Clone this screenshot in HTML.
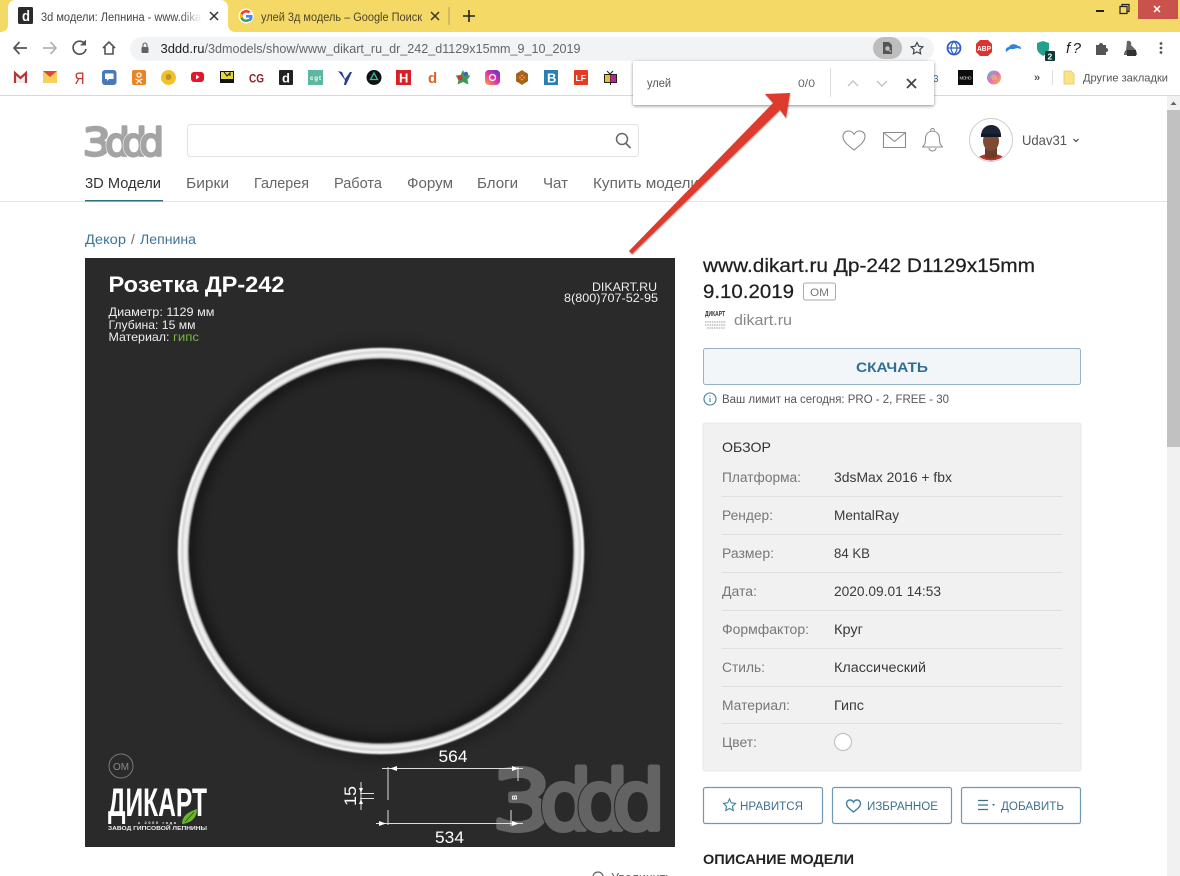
<!DOCTYPE html>
<html lang="ru"><head><meta charset="utf-8"><title>3d модели: Лепнина</title>
<style>
html,body{margin:0;padding:0;background:#fff;width:1180px;height:876px;overflow:hidden}
svg{display:block;position:absolute;left:0;top:0}
text{font-family:"Liberation Sans","DejaVu Sans",sans-serif;white-space:pre}
.l{font-size:13.5px;fill:#777}.v{font-size:13.5px;fill:#3a3a3a}
.n{font-size:14.5px;fill:#666}.b{font-size:11.5px;fill:#3f6f8d}
.ln{stroke:#dfdfdf;stroke-width:1}
.dim{stroke:#ddd;stroke-width:1;fill:none}
.pg{fill:none;stroke:#8c8c8c;stroke-width:1.1;stroke-linejoin:round}
.btn{fill:#fff;stroke:#6d99b4;stroke-width:1.2}
.lg text{font-family:"DejaVu Sans",sans-serif;stroke-linejoin:round}
.lg1{font-size:38.5px}.lg1 .u{fill:#fff;stroke:#fff;stroke-width:3.4px}.lg1 .t{fill:#a4a4a4;stroke:#a4a4a4;stroke-width:2.4px}
.lg2{font-size:82px}.lg2 .u{fill:#2a2a2a;stroke:#2a2a2a;stroke-width:7px}.lg2 .t{fill:#636363;stroke:#636363;stroke-width:5px}
</style></head><body>
<svg width="1180" height="876" viewBox="0 0 1180 876" xmlns="http://www.w3.org/2000/svg">
<defs>
<linearGradient id="fade" x1="0" x2="1"><stop offset="0" stop-color="#fff" stop-opacity="0"/><stop offset="1" stop-color="#fff"/></linearGradient>
<linearGradient id="cg" x1="0" x2="1" y1="0" y2="1"><stop offset="0" stop-color="#4cc"/><stop offset=".5" stop-color="#e6b"/><stop offset="1" stop-color="#ec3"/></linearGradient>
<linearGradient id="ig" x1="0" x2="1" y1="1" y2="0"><stop offset="0" stop-color="#fa3"/><stop offset=".5" stop-color="#d3a"/><stop offset="1" stop-color="#53c"/></linearGradient>
<filter id="bl" x="-20%" y="-20%" width="140%" height="140%"><feGaussianBlur stdDeviation="6"/></filter>
<filter id="bs" x="-20%" y="-20%" width="140%" height="140%"><feGaussianBlur stdDeviation=".7"/></filter>
<filter id="sh" x="-5%" y="-10%" width="110%" height="130%"><feDropShadow dx="0" dy="1" stdDeviation="1.5" flood-color="#000" flood-opacity=".45"/></filter>
<filter id="as" x="-10%" y="-10%" width="120%" height="120%"><feDropShadow dx=".5" dy="1" stdDeviation=".8" flood-color="#000" flood-opacity=".35"/></filter>
<clipPath id="im"><rect x="85" y="258" width="590" height="589"/></clipPath>
<clipPath id="av"><circle cx="991" cy="140" r="20.5"/></clipPath>
</defs>

<!-- chrome frame -->
<rect width="1180" height="32" fill="#f4d967"/>
<path d="M0 32C5 32 8 29 8 25V8C8 3 11 0 16 0H220C225 0 228 3 228 8V25C228 29 231 32 236 32Z" fill="#fff"/>
<rect x="18" y="7" width="15" height="17" rx="1.5" fill="#2b2b2b"/>
<text x="22" y="21" font-size="15" font-weight="bold" fill="#fff" textLength="8" lengthAdjust="spacingAndGlyphs">d</text>
<text x="41" y="21" font-size="11.5" fill="#444" textLength="160" lengthAdjust="spacingAndGlyphs">3d модели: Лепнина - www.dika</text>
<rect x="180" y="8" width="22" height="18" fill="url(#fade)"/>
<path d="M210 12l8 8M218 12l-8 8" stroke="#333" stroke-width="1.5"/>
<circle cx="246" cy="16" r="7.5" fill="#fff"/>
<path d="M246 12.500a3.500 3.500 0 0 1 2.400 1l2-2a6.500 6.500 0 0 0-10 2l2.300 1.800A3.800 3.800 0 0 1 246 12.500z" fill="#ea4335"/>
<path d="M242.700 15.200l-2.300-1.800a6.500 6.500 0 0 0 0 5.200l2.300-1.800a3.800 3.800 0 0 1 0-1.600z" fill="#fbbc05"/>
<path d="M246 19.500a3.500 3.500 0 0 1-3.300-2.700l-2.300 1.800a6.500 6.500 0 0 0 9.800 2l-2.200-1.700a3.800 3.800 0 0 1-2 .6z" fill="#34a853"/>
<path d="M252.300 15H246v2.600h3.600a3 3 0 0 1-1.300 1.900l2.200 1.700a6.300 6.300 0 0 0 1.800-6.200z" fill="#4285f4"/>
<text x="261" y="21" font-size="11.5" fill="#4c4528" textLength="161" lengthAdjust="spacingAndGlyphs">улей 3д модель – Google Поиск</text>
<path d="M431 12l8 8M439 12l-8 8" stroke="#3a3520" stroke-width="1.5"/>
<rect x="448.500" y="7" width="1" height="18" fill="#a99b58"/>
<path d="M469 10v12M463 16h12" stroke="#222" stroke-width="1.6"/>
<rect x="1096" y="10" width="8" height="2" fill="#222"/>
<path d="M1120 6.500h7v7h-7zM1122 6.500V4.500h7v7h-2" fill="none" stroke="#222" stroke-width="1.2"/>
<rect x="1138" y="0" width="40" height="19" fill="#c9524c"/>
<path d="M1154 6l6 6M1160 6l-6 6" stroke="#fff" stroke-width="1.5"/>

<!-- toolbar -->
<rect y="32" width="1180" height="63" fill="#fff"/>
<rect y="95" width="1180" height="1" fill="#d8d8d8"/>
<path d="M27 48H14M19.500 42L14 48l5.500 6" fill="none" stroke="#555" stroke-width="1.7"/>
<path d="M43 48h13M50.500 42L56 48l-5.500 6" fill="none" stroke="#b4b4b4" stroke-width="1.7"/>
<path d="M85 44a6.500 6.500 0 1 0 1 5" fill="none" stroke="#555" stroke-width="1.7"/><path d="M86 39.500v6h-6z" fill="#555"/>
<path d="M103 48l6-6 6 6M105 47v7h8v-7" fill="none" stroke="#555" stroke-width="1.6"/>
<rect x="130" y="37" width="804" height="24" rx="12" fill="#f1f3f4"/>
<rect x="141.500" y="47" width="7" height="6" rx="1" fill="#5f6368"/><path d="M143 47v-2a2 2 0 0 1 4 0v2" fill="none" stroke="#5f6368" stroke-width="1.1"/>
<text x="160.500" y="53" font-size="12.500" fill="#222" textLength="44" lengthAdjust="spacingAndGlyphs">3ddd.ru</text>
<text x="204.500" y="53" font-size="12.500" fill="#666" textLength="376" lengthAdjust="spacingAndGlyphs">/3dmodels/show/www_dikart_ru_dr_242_d1129x15mm_9_10_2019</text>
<rect x="873" y="37" width="29" height="22" rx="11" fill="#bdbdbd"/>
<path d="M883 42h6l3 3v9h-9z" fill="#555"/><circle cx="887.500" cy="48.500" r="2.300" fill="#bdbdbd"/><path d="M889 50l2 2" stroke="#bdbdbd"/>
<path d="M917 42.500l1.800 3.700 4.100.6-3 2.900.7 4.100-3.600-1.900-3.600 1.900.7-4.100-3-2.900 4.100-.6z" fill="none" stroke="#444" stroke-width="1.2"/>
<circle cx="954" cy="48" r="6.500" fill="none" stroke="#2f5fc9" stroke-width="1.800"/><path d="M954 41.500c-4 4-4 9 0 13c4-4 4-9 0-13M947.500 48h13" fill="none" stroke="#2f5fc9" stroke-width="1.200"/>
<path d="M980 40h8l4 4v8l-4 4h-8l-4-4v-8z" fill="#d9342f"/>
<text x="977" y="51" font-size="7.500" font-weight="bold" fill="#fff" textLength="14" lengthAdjust="spacingAndGlyphs">ABP</text>
<path d="M1006 52c-1-3 1-5 3-5c1-3 6-4 9-1c2 0 3 1 3 3l-4-1l-3 1h-4z" fill="#2b86d8"/>
<path d="M1043 41l6 2v5c0 4-3 6-6 8c-3-2-6-4-6-8v-5z" fill="#23a18c"/>
<rect x="1045" y="51" width="10" height="10" rx="1" fill="#0e3a33"/><text x="1047.500" y="59.500" font-size="8.500" font-weight="bold" fill="#fff">2</text>
<text x="1066" y="53" font-family="Liberation Serif" font-style="italic" font-size="15" fill="#222" textLength="15">f?</text>
<path d="M1096 45h3a2 2 0 0 1 4 0h3v3a2 2 0 0 1 0 4v3h-10z" fill="#555"/>
<path d="M1127 41c3-1 5 1 4 4l3 3c2 2 3 4 3 7h-13c0-3 1-4 2-5z" fill="#666"/><rect x="1127" y="50" width="9" height="6" fill="#333"/>
<circle cx="1161" cy="43.500" r="1.400" fill="#555"/><circle cx="1161" cy="48" r="1.400" fill="#555"/><circle cx="1161" cy="52.500" r="1.400" fill="#555"/>

<!-- bookmarks -->
<path d="M15 83V73l5.500 5 5.500-5v10" fill="#eee" stroke="#b03a36" stroke-width="2.200"/>
<rect x="43" y="71" width="14" height="12" fill="#f6cf5c"/><path d="M43 71l7 6 7-6z" fill="#e4482c"/>
<text x="74.500" y="84" font-size="17" fill="#c42f2a" textLength="10" lengthAdjust="spacingAndGlyphs">Я</text>
<rect x="102" y="70" width="14.500" height="15" rx="3" fill="#4a79b8"/><path d="M105 73.500h8.500v5.500h-4.500l-2 2v-2h-2z" fill="#fff"/>
<rect x="132" y="70" width="14" height="15" rx="2" fill="#ec8424"/><circle cx="139" cy="75" r="2" fill="none" stroke="#fff" stroke-width="1.300"/><path d="M135.500 79l3.500 1.500 3.500-1.500M136.500 83.500l2.500-3 2.500 3" fill="none" stroke="#fff" stroke-width="1.200"/>
<circle cx="168.500" cy="77.500" r="7.500" fill="#f3c22b"/><circle cx="168.500" cy="77" r="3" fill="#b9962a"/>
<rect x="191" y="72" width="13" height="10" rx="3" fill="#e8142a"/><path d="M196 74.500l3.500 2.500-3.500 2.500z" fill="#fff"/>
<rect x="220" y="71" width="14" height="12" fill="#111"/><rect x="221" y="72" width="12" height="7" fill="#e3d744"/><path d="M224 72l3 4 3-3v3" stroke="#111" fill="none"/>
<text x="249" y="82.500" font-size="11.500" font-weight="bold" fill="#8e1f27" textLength="15" lengthAdjust="spacingAndGlyphs">CG</text>
<rect x="279" y="70" width="14" height="15" rx="1" fill="#222"/><text x="282" y="82.500" font-size="13" font-weight="bold" fill="#fff">d</text>
<rect x="308" y="70" width="15" height="15" fill="#5db7a2"/><text x="310" y="80" font-size="6" font-weight="bold" fill="#fff" textLength="11">cgt</text>
<path d="M338 71l4 1 3 7 5-7 2 0-6 13h-2l1-5z" fill="#243f8e"/>
<circle cx="374" cy="77.500" r="7.500" fill="#111"/><path d="M374 73l3.500 6.500h-7z" fill="none" stroke="#2fc3a6" stroke-width="1.300"/>
<rect x="396" y="70" width="15" height="15" fill="#d72027"/><text x="399" y="82.500" font-size="13" font-weight="bold" fill="#fff">Н</text>
<text x="428" y="83" font-size="15" font-weight="bold" fill="#d8672c">d</text>
<path d="M463 70l2.500 5 5 .5-3 4 1 5-5.500-2.500-5.500 2.500 1-5-3-4 5-.5z" fill="#3b9b57"/><circle cx="460" cy="78" r="2.500" fill="#d0352e"/><circle cx="466" cy="74" r="2.200" fill="#3b62c4"/>
<rect x="485" y="70" width="15" height="15" rx="4" fill="url(#ig)"/><circle cx="492.500" cy="77.500" r="3" fill="none" stroke="#fff" stroke-width="1.300"/>
<path d="M522 70l6 4v7l-6 4-6-4v-7z" fill="#9c6a1c"/><circle cx="522" cy="77.500" r="2.800" fill="#e0a23a"/><path d="M517 73l10 9M527 73l-10 9" stroke="#c6401e"/>
<rect x="544" y="70" width="14" height="15" fill="#2b7fb2"/><text x="547" y="82.500" font-size="13" font-weight="bold" fill="#fff">В</text>
<rect x="574" y="70" width="14" height="15" rx="1" fill="#e53a23"/><text x="575.500" y="81" font-size="8.500" font-weight="bold" fill="#fff">LF</text>
<rect x="604" y="74" width="13" height="9" fill="#222"/><rect x="605" y="75" width="5" height="7" fill="#e2c32c"/><rect x="610.500" y="75" width="5.500" height="7" fill="#b5298b"/><path d="M607 71l3 3 3-3M610.500 83v2" stroke="#222" fill="none"/>
<text x="933" y="82" font-size="10" fill="#2f6fa8">3</text>
<rect x="958" y="70" width="15" height="15" fill="#0c0c0c"/><text x="959.500" y="79.500" font-size="4.500" fill="#ddd" textLength="12">MOHO</text>
<circle cx="994" cy="77.500" r="7" fill="url(#cg)"/><circle cx="994" cy="77.500" r="3" fill="#d7c95b" opacity=".6"/>
<text x="1034" y="81" font-size="11" font-weight="bold" fill="#555">»</text>
<rect x="1052" y="70" width="1" height="15" fill="#ddd"/>
<path d="M1064 71h7l3 3v10h-10z" fill="#fbe38a" stroke="#e4c556" stroke-width=".8"/>
<text x="1083" y="81.500" font-size="11" fill="#555" textLength="85" lengthAdjust="spacingAndGlyphs">Другие закладки</text>

<!-- scrollbar -->
<rect x="1167" y="96" width="13" height="780" fill="#f1f1f1"/>
<path d="M1170.500 105l3-3.500 3 3.500z" fill="#666"/>
<rect x="1167" y="110" width="13" height="337" fill="#c1c1c1"/>

<!-- header -->
<g class="lg lg1">
<text class="t" transform="translate(82.600,155.300) scale(1.15,1)">3</text>
<text class="u" transform="translate(105.200,155.300)">d</text><text class="t" transform="translate(105.200,155.300)">d</text>
<text class="u" transform="translate(122.400,155.300)">d</text><text class="t" transform="translate(122.400,155.300)">d</text>
<text class="u" transform="translate(139.500,155.300)">d</text><text class="t" transform="translate(139.500,155.300)">d</text>
</g>
<rect x="187.500" y="124.500" width="451" height="32" rx="3" fill="#fff" stroke="#e2e2e2"/>
<circle cx="622" cy="139" r="5.500" fill="none" stroke="#666" stroke-width="1.500"/><path d="M626 143.500l4.500 4.500" stroke="#666" stroke-width="1.600"/>
<path class="pg" d="M854 150c-5-4-11-8-11-13.500c0-3.500 2.500-5.500 5.500-5.500c2.500 0 4.500 1.500 5.500 3.500c1-2 3-3.500 5.500-3.500c3 0 5.500 2 5.500 5.500c0 5.500-6 9.500-11 13.500z"/>
<rect class="pg" x="883.500" y="132.500" width="22" height="15"/><path class="pg" d="M883.500 132.500l11 9 11-9"/>
<path class="pg" d="M922.500 147c2-2 3-3.500 3-8c0-4.500 2.500-7.500 7-8c4.500 .5 7 3.500 7 8c0 4.500 1 6 3 8zM929 148a3.500 3 0 0 0 7 0M930.500 130.500a2 2 0 0 1 4 0"/>
<circle cx="991" cy="140" r="21.500" fill="#fff" stroke="#ccc"/>
<g clip-path="url(#av)">
<path d="M974 165c2-9 9-11 17-11s15 2 17 11z" fill="#b6342a"/>
<path d="M985 148h12v9c-3 2-9 2-12 0z" fill="#6d3c28"/>
<ellipse cx="991" cy="141" rx="8" ry="10" fill="#7d4a32"/>
<path d="M981 136c0-7 5-11 10-11s10 3 10 11z" fill="#1c2336"/><rect x="981" y="134" width="20" height="3" fill="#111827"/>
</g>
<text x="1022" y="145" font-size="14" fill="#555" textLength="45" lengthAdjust="spacingAndGlyphs">Udav31</text>
<path d="M1073.500 139l2.500 2.500 2.500-2.500" fill="none" stroke="#444" stroke-width="1.200"/>

<text class="n" x="85" y="188" style="fill:#333" textLength="76" lengthAdjust="spacingAndGlyphs">3D Модели</text>
<text class="n" x="186" y="188" textLength="43" lengthAdjust="spacingAndGlyphs">Бирки</text>
<text class="n" x="254" y="188" textLength="55" lengthAdjust="spacingAndGlyphs">Галерея</text>
<text class="n" x="334" y="188" textLength="48" lengthAdjust="spacingAndGlyphs">Работа</text>
<text class="n" x="407" y="188" textLength="46" lengthAdjust="spacingAndGlyphs">Форум</text>
<text class="n" x="477" y="188" textLength="41" lengthAdjust="spacingAndGlyphs">Блоги</text>
<text class="n" x="543" y="188" textLength="25" lengthAdjust="spacingAndGlyphs">Чат</text>
<text class="n" x="593" y="188" textLength="106" lengthAdjust="spacingAndGlyphs">Купить модели</text>
<rect y="201" width="1167" height="1" fill="#e4e4e4"/>
<rect x="85" y="200" width="78" height="1.500" fill="#2f7080"/>
<text x="85" y="244" font-size="13.500" fill="#3f7499" textLength="41" lengthAdjust="spacingAndGlyphs">Декор</text>
<text x="131" y="244" font-size="13.500" fill="#666">/</text>
<text x="140" y="244" font-size="13.500" fill="#3f7499" textLength="56" lengthAdjust="spacingAndGlyphs">Лепнина</text>

<!-- product image -->
<rect x="85" y="258" width="590" height="589" fill="#2a2a2a"/>
<g clip-path="url(#im)">
<circle cx="381" cy="551" r="192" fill="#262626"/>
<circle cx="381" cy="551" r="192" fill="none" stroke="#000" stroke-width="10" filter="url(#bl)" opacity=".55"/>
<circle cx="381" cy="551" r="206" fill="none" stroke="#000" stroke-width="6" filter="url(#bl)" opacity=".35"/>
<g filter="url(#bs)">
<circle cx="381" cy="551" r="198" fill="none" stroke="#d6d6d6" stroke-width="10.500"/>
<circle cx="381" cy="551" r="201.500" fill="none" stroke="#f6f6f6" stroke-width="2.500"/>
<circle cx="381" cy="551" r="196" fill="none" stroke="#efefef" stroke-width="3"/>
<circle cx="381" cy="551" r="192.500" fill="none" stroke="#666" stroke-width="1"/>
</g>
<g class="lg lg2">
<text class="t" transform="translate(492,829.500) scale(1.15,1)">3</text>
<text class="u" transform="translate(540,829.500)">d</text><text class="t" transform="translate(540,829.500)">d</text>
<text class="u" transform="translate(576.500,829.500)">d</text><text class="t" transform="translate(576.500,829.500)">d</text>
<text class="u" transform="translate(613,829.500)">d</text><text class="t" transform="translate(613,829.500)">d</text>
</g>
</g>
<text x="108.500" y="292" font-size="22" font-weight="bold" fill="#fff" textLength="176" lengthAdjust="spacingAndGlyphs">Розетка ДР-242</text>
<text x="108.500" y="316" font-size="12" fill="#eee" textLength="106" lengthAdjust="spacingAndGlyphs">Диаметр: 1129 мм</text>
<text x="108.500" y="329" font-size="12" fill="#eee" textLength="87" lengthAdjust="spacingAndGlyphs">Глубина: 15 мм</text>
<text x="108.500" y="341" font-size="12" fill="#eee" textLength="61" lengthAdjust="spacingAndGlyphs">Материал:</text>
<text x="173" y="341" font-size="12" fill="#79b83f" textLength="26" lengthAdjust="spacingAndGlyphs">гипс</text>
<text x="592" y="291" font-size="12" fill="#eee" textLength="65" lengthAdjust="spacingAndGlyphs">DIKART.RU</text>
<text x="564" y="302" font-size="12" fill="#eee" textLength="94" lengthAdjust="spacingAndGlyphs">8(800)707-52-95</text>

<text x="438.500" y="762" font-size="17" fill="#fff" textLength="29" lengthAdjust="spacingAndGlyphs">564</text>
<text x="435" y="843" font-size="17" fill="#fff" textLength="29" lengthAdjust="spacingAndGlyphs">534</text>
<text transform="translate(356,806) rotate(-90)" font-size="17" fill="#fff" textLength="20" lengthAdjust="spacingAndGlyphs">15</text>
<path class="dim" d="M382 768.500H523M376 823.500H523M388 767v33M388 810v15M518 767v14M511 810v16M361 782v28M360 793.500h14M360 798.500h14"/>
<path d="M390 768.500l7-2.500v5zM519 768.500l-7-2.500v5zM386 823.500l-7-2.500v5zM519 823.500l-7-2.500v5zM361 793l-2-5h4zM361 799l-2 5h4z" fill="#fff"/>
<text x="511" y="800" font-size="7" font-weight="bold" fill="#fff" transform="rotate(-90 514 797)">B</text>

<circle cx="121" cy="766" r="12" fill="none" stroke="#777"/>
<text x="113" y="770" font-size="10" fill="#8a8a8a" textLength="16" lengthAdjust="spacingAndGlyphs">OM</text>
<text x="108" y="816" font-family="Liberation Serif" font-size="40" font-weight="bold" fill="#fff" textLength="99" lengthAdjust="spacingAndGlyphs">ДИКАРТ</text>
<path d="M182 824c0-8 6-12 15-15c0 9-6 14-15 15z" fill="#6bb52e"/><path d="M185 822l9-10" stroke="#2a4a12" stroke-width=".7"/>
<text x="138" y="824" font-size="4" font-weight="bold" fill="#eee" textLength="38">с 2000 года</text>
<text x="108" y="830" font-size="5.500" font-weight="bold" fill="#eee" textLength="99" lengthAdjust="spacingAndGlyphs">ЗАВОД ГИПСОВОЙ ЛЕПНИНЫ</text>

<!-- find bar -->
<rect x="633" y="61" width="301" height="44" rx="2" fill="#fff" filter="url(#sh)"/>
<text x="647" y="87" font-size="11.500" fill="#555" textLength="24" lengthAdjust="spacingAndGlyphs">улей</text>
<text x="798" y="87" font-size="11" fill="#666" textLength="17" lengthAdjust="spacingAndGlyphs">0/0</text>
<rect x="830" y="68" width="1" height="29" fill="#ddd"/>
<path d="M848 86l5-5 5 5M877 81l5 5 5-5" fill="none" stroke="#c4c4c4" stroke-width="1.400"/>
<path d="M907 79l9 9M916 79l-9 9" stroke="#444" stroke-width="1.800"/>

<!-- red arrow -->
<path d="M629 251L773 103L765 94L790 93L786 118L780 110L632 254Z" fill="#dd3a2e" filter="url(#as)"/>

<!-- right column -->
<text x="703" y="272" font-size="19.500" fill="#1f1f1f" stroke="#1f1f1f" stroke-width=".25" textLength="332" lengthAdjust="spacingAndGlyphs">www.dikart.ru Др-242 D1129x15mm</text>
<text x="703" y="298" font-size="19.500" fill="#1f1f1f" stroke="#1f1f1f" stroke-width=".25" textLength="91" lengthAdjust="spacingAndGlyphs">9.10.2019</text>
<rect x="803.500" y="283" width="32" height="17" rx="2" fill="#fff" stroke="#aaa"/>
<text x="810" y="296" font-size="11" fill="#777" textLength="19" lengthAdjust="spacingAndGlyphs">ОМ</text>
<text x="705" y="316" font-family="Liberation Serif" font-size="7" font-weight="bold" fill="#333" textLength="20" lengthAdjust="spacingAndGlyphs">ДИКАРТ</text>
<path d="M705 322h21M705 325h21M707 328h18" stroke="#999" stroke-width="1" stroke-dasharray="1.500 .8"/>
<text x="734" y="325" font-size="14.500" fill="#888" textLength="58" lengthAdjust="spacingAndGlyphs">dikart.ru</text>
<rect x="703.500" y="348.500" width="377" height="36" rx="2" fill="#f2f6f8" stroke="#94b2c6"/>
<text x="856" y="372" font-size="14" font-weight="bold" fill="#2f6f96" textLength="72" lengthAdjust="spacingAndGlyphs">СКАЧАТЬ</text>
<circle cx="710" cy="399" r="6" fill="none" stroke="#3d7f9c" stroke-width="1.100"/><path d="M710 398v4M710 395.500v1" stroke="#3d7f9c" stroke-width="1.100"/>
<text x="722" y="403" font-size="11.500" fill="#555" textLength="227" lengthAdjust="spacingAndGlyphs">Ваш лимит на сегодня: PRO - 2, FREE - 30</text>

<rect x="703" y="423" width="378" height="348" rx="2" fill="#f1f1f1" stroke="#e9e9e9"/>
<text x="722" y="452" font-size="14" fill="#333" textLength="49" lengthAdjust="spacingAndGlyphs">ОБЗОР</text>
<path class="ln" d="M722 496.500h340M722 534.500h340M722 572.500h340M722 610.500h340M722 648.500h340M722 686.500h340M722 723.500h340"/>
<text class="l" x="722" y="482" textLength="79" lengthAdjust="spacingAndGlyphs">Платформа:</text><text class="v" x="834" y="482" textLength="118" lengthAdjust="spacingAndGlyphs">3dsMax 2016 + fbx</text>
<text class="l" x="722" y="520" textLength="51" lengthAdjust="spacingAndGlyphs">Рендер:</text><text class="v" x="834" y="520" textLength="65" lengthAdjust="spacingAndGlyphs">MentalRay</text>
<text class="l" x="722" y="558" textLength="52" lengthAdjust="spacingAndGlyphs">Размер:</text><text class="v" x="834" y="558" textLength="36" lengthAdjust="spacingAndGlyphs">84 KB</text>
<text class="l" x="722" y="596" textLength="35" lengthAdjust="spacingAndGlyphs">Дата:</text><text class="v" x="834" y="596" textLength="107" lengthAdjust="spacingAndGlyphs">2020.09.01 14:53</text>
<text class="l" x="722" y="634" textLength="87" lengthAdjust="spacingAndGlyphs">Формфактор:</text><text class="v" x="834" y="634" textLength="29" lengthAdjust="spacingAndGlyphs">Круг</text>
<text class="l" x="722" y="672" textLength="43" lengthAdjust="spacingAndGlyphs">Стиль:</text><text class="v" x="834" y="672" textLength="92" lengthAdjust="spacingAndGlyphs">Классический</text>
<text class="l" x="722" y="710" textLength="68" lengthAdjust="spacingAndGlyphs">Материал:</text><text class="v" x="834" y="710" textLength="30" lengthAdjust="spacingAndGlyphs">Гипс</text>
<text class="l" x="722" y="747" textLength="35" lengthAdjust="spacingAndGlyphs">Цвет:</text>
<circle cx="843" cy="742" r="8.500" fill="#fff" stroke="#bbb"/>

<rect class="btn" x="703.500" y="787.500" width="119" height="36" rx="2"/>
<rect class="btn" x="832.500" y="787.500" width="119" height="36" rx="2"/>
<rect class="btn" x="961.500" y="787.500" width="119" height="36" rx="2"/>
<path d="M729.500 799l1.800 3.800 4.200.6-3 2.900.7 4.200-3.700-2-3.700 2 .7-4.200-3-2.900 4.200-.6z" fill="none" stroke="#3f7fa3" stroke-width="1.100"/>
<text class="b" x="740" y="810" textLength="63" lengthAdjust="spacingAndGlyphs">НРАВИТСЯ</text>
<path d="M853.500 812c-3-2.500-7-5-7-8.500c0-2.200 1.700-3.500 3.500-3.500c1.500 0 2.800.9 3.500 2.200c.7-1.300 2-2.200 3.500-2.200c1.800 0 3.500 1.300 3.500 3.500c0 3.500-4 6-7 8.500z" fill="none" stroke="#3f7fa3" stroke-width="1.400"/>
<text class="b" x="867" y="810" textLength="71" lengthAdjust="spacingAndGlyphs">ИЗБРАННОЕ</text>
<path d="M978 800.500h10M978 805h10M978 809.500h10" stroke="#3f6f8d" stroke-width="1.300"/><path d="M992 804h3l-1.500 2z" fill="#3f6f8d"/>
<text class="b" x="1001" y="810" textLength="63" lengthAdjust="spacingAndGlyphs">ДОБАВИТЬ</text>
<text x="703" y="864" font-size="14" font-weight="bold" fill="#222" textLength="151" lengthAdjust="spacingAndGlyphs">ОПИСАНИЕ МОДЕЛИ</text>
<circle cx="598" cy="877" r="5" fill="none" stroke="#666" stroke-width="1.300"/>
<text x="611" y="882" font-size="12.500" fill="#666" textLength="61" lengthAdjust="spacingAndGlyphs">Увеличить</text>
</svg>
</body></html>
